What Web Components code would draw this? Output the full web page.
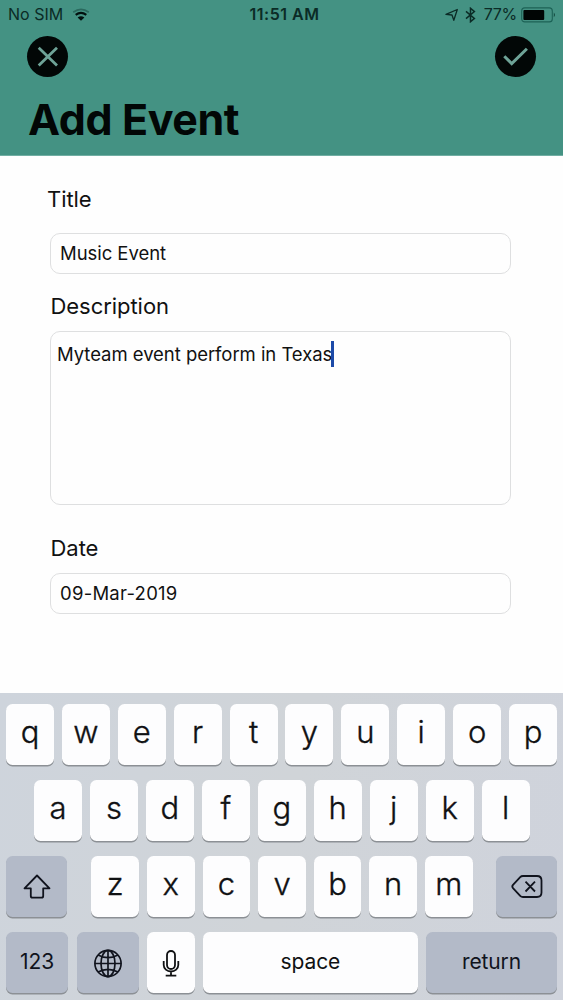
<!DOCTYPE html>
<html lang="en">
<head>
<meta charset="utf-8">
<title>Add Event</title>
<style>
html, body { margin: 0; height: 100%; }
body { font-family: Inter, "Liberation Sans", sans-serif; color: #111; background: #fefefe; overflow: hidden; }
</style>
</head>
<body>
<event-app></event-app>
<script>
const define = (name, html) => {
  const template = document.createElement('template');
  template.innerHTML = html;
  customElements.define(name, class extends HTMLElement {
    constructor() {
      super();
      this.attachShadow({ mode: 'open' }).append(template.content.cloneNode(true));
    }
  });
};

define('status-bar', `
<style>
:host { display: grid; grid-template-columns: 1fr auto 1fr; align-items: center; height: 29px; padding: 0 7px 0 8px; font-size: 16px; line-height: 29px; color: #0b2b26; }
div { display: flex; align-items: center; }
.time { font-weight: 600; letter-spacing: .5px; margin-left: 5px; }
.right { justify-content: flex-end; }
.pct { letter-spacing: -.3px; margin-left: 8px; }
svg { display: block; flex: none; }
</style>
<div><span>No SIM</span>
<svg style="margin-left:9px" width="18" height="14" viewBox="0 0 18 14" fill="none"><path d="M1.200 4.200Q9-1.500 16.800 4.200" stroke="#2a695e" stroke-width="1.700"/><path d="M3.700 6.800Q9 2.800 14.300 6.800" stroke="#02110f" stroke-width="2.200"/><path d="M9 12.800 5.600 9.400Q9 7 12.400 9.400Z" fill="#02110f"/></svg></div>
<div class="time">11:51 AM</div>
<div class="right">
<svg width="13" height="14" viewBox="0 0 13 14" fill="none" stroke="#0b2b26" stroke-width="1.300" stroke-linejoin="round"><path d="M12.300 1.500 1 6.400 7 7 8.800 12.300Z"/></svg>
<svg style="margin-left:7px" width="11" height="16" viewBox="0 0 11 16" fill="none" stroke="#0b2b26" stroke-width="1.500"><path d="M1 4.400 9.400 11.400 5.500 14.700V1.300L9.400 4.600 1 11.600"/></svg>
<span class="pct">77%</span>
<svg style="margin-left:4px" width="35" height="16" viewBox="0 0 35 16"><rect x=".7" y=".9" width="30.600" height="14" rx="3" fill="none" stroke="#1c6256" stroke-width="1.100"/><rect x="2.400" y="2.900" width="20.800" height="10" rx="1" fill="#000504"/><path d="M32.800 5.500Q35 7.900 32.800 10.300Z" fill="#0f4139"/></svg>
</div>`);

define('round-button', `
<style>
:host { display: grid; place-items: center; width: 41px; height: 41px; border-radius: 50%; background: #020706; color: #6ea397; }
</style><slot></slot>`);

define('page-header', `
<style>
:host { display: block; box-sizing: border-box; height: 156px; background: #449283; border-bottom: 1px solid #71aea3; }
nav { display: flex; justify-content: space-between; padding: 7px 27px 0; }
h1 { margin: 16px 0 0 28px; font-size: 43px; line-height: 52px; font-weight: 700; letter-spacing: -.4px; color: #020706; white-space: nowrap; }
svg { display: block; }
</style>
<status-bar></status-bar>
<nav>
<round-button><svg width="41" height="41" viewBox="0 0 41 41" fill="none" stroke="currentColor" stroke-width="2.800"><path d="M11.700 11.700 30 29.500M30 11.700 11.700 29.500"/></svg></round-button>
<round-button><svg width="41" height="41" viewBox="0 0 41 41" fill="none" stroke="currentColor" stroke-width="3"><path d="M9.300 20.200 16.700 27.600 31.900 12.700"/></svg></round-button>
</nav>
<h1><slot></slot></h1>`);

define('form-field', `
<style>
:host { display: block; }
label { display: block; font-size: 22px; line-height: 28px; margin: 0 0 var(--gap, 11px) var(--indent, .5px); letter-spacing: -.05px; }
.box { box-sizing: border-box; display: flex; height: var(--box-height, 41px); padding: var(--box-padding, 5.500px 9px); border: 1.300px solid #dedfe0; border-radius: 10px; font-size: 18.500px; line-height: 26px; letter-spacing: var(--spacing, 0); white-space: nowrap; }
</style>
<label><slot name="label"></slot></label><div class="box"><slot></slot></div>`);

define('text-caret', `
<style>:host { display: block; width: 3px; height: 26px; margin-left: -1px; background: #1c4aa8; }</style>`);

define('key-cap', `
<style>
:host { box-sizing: border-box; display: grid; place-items: center; flex: 1 1 0; min-width: 0; height: 61px; border-radius: 6.500px; background: #fdfdfe; box-shadow: 0 1.500px 0 #8c9095; color: #101113; font-size: 31px; line-height: 40px; font-weight: 300; -webkit-text-stroke: .35px currentColor; }
:host([tone="dark"]) { background: #b3bac8; color: #10131d; }
:host([kind="word"]) { font-size: 21px; font-weight: 400; letter-spacing: -.1px; -webkit-text-stroke: 0; }
span { display: block; transform: translateY(var(--lift, -2px)); }
</style><span><slot></slot></span>`);

define('soft-keyboard', `
<style>
:host { display: flex; flex-direction: column; gap: 15.200px; box-sizing: border-box; height: 307px; padding: 10.500px 6px 0; background: linear-gradient(100deg, #ced4dc, #d0d4d8 50%, #cfd3dc); }
.row { display: flex; gap: 7.900px; }
.inset { padding: 0 27.500px 0 28px; }
key-cap[kind] { --lift: -1px; }
key-cap.icon { --lift: .5px; }
svg { display: block; fill: none; stroke: currentColor; }
</style>
<div class="row" id="top"></div>
<div class="row inset" id="home"></div>
<div class="row" id="low">
<key-cap class="icon" tone="dark" style="flex:0 0 61px;margin-right:16.500px"><svg width="30" height="28" viewBox="0 0 30 28" stroke-width="1.800" stroke-linejoin="round"><path d="M15 3 2.500 15.800H8.800V23.500Q8.800 25.200 10.500 25.200H19.500Q21.200 25.200 21.200 23.500V15.800H27.500Z"/></svg></key-cap>
<key-cap class="icon" id="back" tone="dark" style="flex:0 0 61px;margin-left:15.500px"><svg width="34" height="26" viewBox="0 0 34 26" stroke-width="1.800" stroke-linejoin="round"><path d="M13 2.500H27Q31.500 2.500 31.500 7V19Q31.500 23.500 27 23.500H13Q11.300 23.500 10.200 22.300L3 14.600Q1.600 13 3 11.400L10.200 3.700Q11.300 2.500 13 2.500ZM15.500 8.200 25 18M25 8.200 15.500 18"/></svg></key-cap>
</div>
<div class="row">
<key-cap kind="word" tone="dark" style="flex:0 0 62px">123</key-cap>
<key-cap class="icon" tone="dark" style="flex:0 0 62px;margin-left:1px"><svg width="30" height="30" viewBox="0 0 30 30" stroke-width="1.700"><circle cx="15" cy="15" r="13.100"/><ellipse cx="15" cy="15" rx="7" ry="13.100"/><path d="M15 1.900V28.100M1.900 15H28.100M5 6.600Q15 11.800 25 6.600M5 23.400Q15 18.200 25 23.400"/></svg></key-cap>
<key-cap class="icon" style="flex:0 0 48px"><svg width="20" height="30" viewBox="0 0 20 30" stroke-width="1.800"><rect x="6" y="2.500" width="8" height="18" rx="4"/><path d="M2.700 12.500V16.500A7.300 6.500 0 0 0 17.300 16.500V12.500M10 23V27M4.700 27.200H15.300"/></svg></key-cap>
<key-cap kind="word">space</key-cap>
<key-cap kind="word" tone="dark" style="flex:0 0 131px">return</key-cap>
</div>`);

define('event-app', `
<style>
:host { display: flex; flex-direction: column; width: 563px; height: 1000px; }
main { flex: 1; display: flex; flex-direction: column; box-sizing: border-box; padding: 29px 52px 0 50px; }
.title { --gap: 20px; --indent: -3px; --spacing: -.05px; }
.description { --gap: 11px; --box-height: 174px; --box-padding: 8.500px 6px; margin-top: 18px; --spacing: -.05px; }
.date { margin-top: 29px; --spacing: .25px; }
</style>
<page-header>Add Event</page-header>
<main>
<form-field class="title"><span slot="label">Title</span>Music Event</form-field>
<form-field class="description"><span slot="label">Description</span>Myteam event perform in Texas<text-caret></text-caret></form-field>
<form-field class="date"><span slot="label">Date</span>09-Mar-2019</form-field>
</main>
<soft-keyboard></soft-keyboard>`);

const keyboard = document.querySelector('event-app').shadowRoot.querySelector('soft-keyboard').shadowRoot;
const addKeys = (row, letters, before = null) => {
  for (const letter of letters) {
    const key = document.createElement('key-cap');
    key.textContent = letter;
    row.insertBefore(key, before);
  }
};
addKeys(keyboard.getElementById('top'), 'qwertyuiop');
addKeys(keyboard.getElementById('home'), 'asdfghjkl');
addKeys(keyboard.getElementById('low'), 'zxcvbnm', keyboard.getElementById('back'));
</script>
</body>
</html>
